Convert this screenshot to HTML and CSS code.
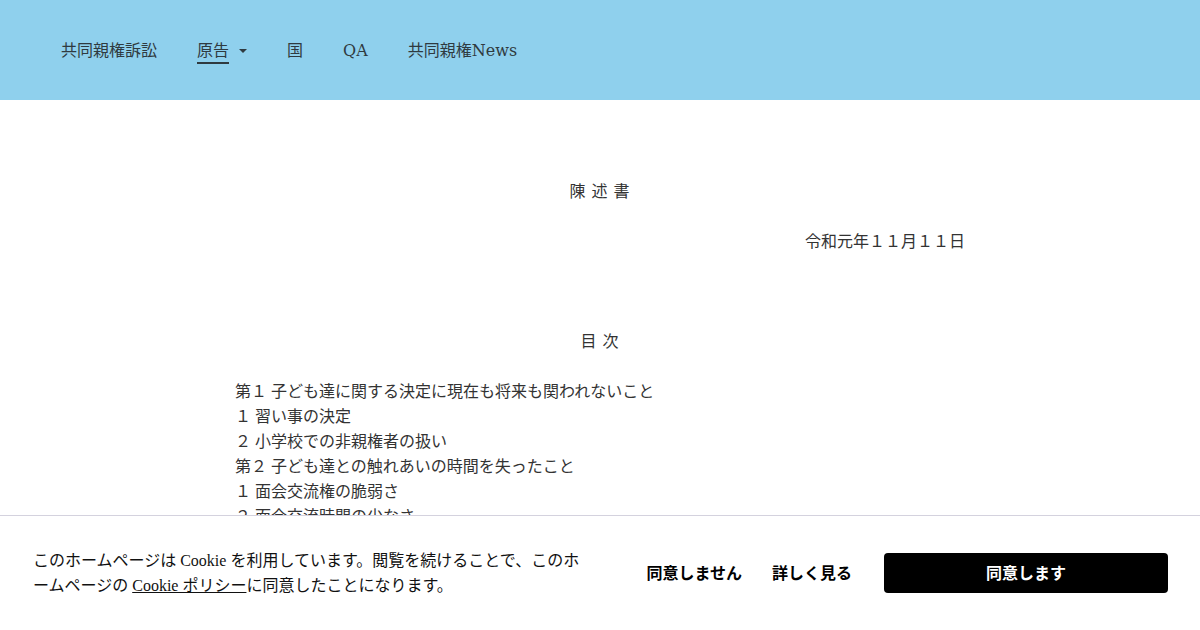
FILE: index.html
```html
<!DOCTYPE html>
<html lang="ja">
<head>
    <meta charset="UTF-8">
    <title>陳述書</title>
    <link rel="stylesheet" href="styles.css">
</head>
<body>
<header class="site-header">
    <nav class="nav">
        <a class="nav-item" href="#">共同親権訴訟</a>
        <a class="nav-item nav-current" href="#"><span class="nav-label">原告</span><span class="caret"></span></a>
        <a class="nav-item" href="#">国</a>
        <a class="nav-item" href="#">QA</a>
        <a class="nav-item" href="#">共同親権News</a>
    </nav>
</header>

<main class="doc">
    <p class="line center spaced">陳 述 書</p>
    <p class="line"></p>
    <p class="line right">令和元年１１月１１日</p>
    <p class="line"></p>
    <p class="line"></p>
    <p class="line"></p>
    <p class="line center spaced">目 次</p>
    <p class="line"></p>
    <p class="line">第１ 子ども達に関する決定に現在も将来も関われないこと</p>
    <p class="line">１ 習い事の決定</p>
    <p class="line">２ 小学校での非親権者の扱い</p>
    <p class="line">第２ 子ども達との触れあいの時間を失ったこと</p>
    <p class="line">１ 面会交流権の脆弱さ</p>
    <p class="line">２ 面会交流時間の少なさ</p>
    <p class="line">３ 子ども達の成長を見守れないこと</p>
</main>

<div class="cookie-bar">
    <p class="cookie-text">このホームページは Cookie を利用しています。閲覧を続けることで、このホームページの <a href="#">Cookie ポリシー</a>に同意したことになります。</p>
    <div class="cookie-actions">
        <button class="btn-plain">同意しません</button>
        <button class="btn-plain">詳しく見る</button>
        <button class="btn-accept">同意します</button>
    </div>
</div>
</body>
</html>
```

FILE: styles.css
```css
*{
    margin: 0;
    box-sizing: border-box;
}

body{
    font-family: "Liberation Serif", "Noto Sans CJK JP", serif;
    color: #333;
    background: #fff;
}

.site-header{
    height: 100px;
    background-color: #8fd0ed;
    display: flex;
    align-items: center;
}

.nav{
    display: flex;
    align-items: center;
    gap: 40px;
    padding-left: 61px;
    padding-top: 2px;
    font-family: "DejaVu Serif", "Noto Sans CJK JP", serif;
    font-size: 16px;
}

.nav-item{
    color: #2f3a40;
    text-decoration: none;
    display: flex;
    align-items: center;
    line-height: 24px;
}

.nav-current .nav-label{
    border-bottom: 2px solid #2f3a40;
    line-height: 22px;
    padding-top: 2px;
}

.caret{
    width: 0;
    height: 0;
    border-left: 4px solid transparent;
    border-right: 4px solid transparent;
    border-top: 4px solid #2f3a40;
    margin-left: 10px;
}

.doc{
    width: 730px;
    margin: 0 auto;
    padding-top: 79px;
    padding-bottom: 140px;
    font-size: 16px;
}

.line{
    height: 25px;
    line-height: 25px;
}

.center{
    text-align: center;
}

.right{
    text-align: right;
}

.spaced{
    letter-spacing: 1px;
}

.cookie-bar{
    position: fixed;
    left: 0;
    right: 0;
    bottom: 0;
    height: 115px;
    background: #fff;
    border-top: 1px solid #d4d2de;
    display: flex;
    align-items: center;
    padding: 0 32px 0 33px;
}

.cookie-text{
    width: 556px;
    font-size: 16px;
    line-height: 25px;
    color: #111;
}

.cookie-text a{
    color: #111;
}

.cookie-actions{
    display: flex;
    align-items: center;
    margin-left: auto;
}

.btn-plain{
    background: none;
    border: none;
    font-family: "Noto Sans CJK JP", sans-serif;
    font-weight: bold;
    font-size: 16px;
    color: #000;
    margin-right: 30px;
    padding: 0 0 3px;
}

.btn-accept{
    width: 284px;
    height: 40px;
    background: #000;
    color: #fff;
    border: none;
    border-radius: 4px;
    font-family: "Noto Sans CJK JP", sans-serif;
    font-weight: bold;
    font-size: 16px;
    margin-left: 2px;
    padding-bottom: 3px;
}
```
